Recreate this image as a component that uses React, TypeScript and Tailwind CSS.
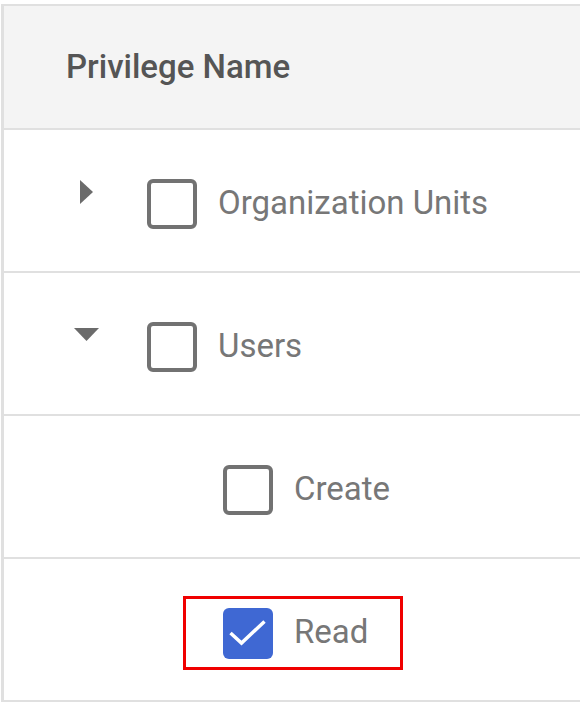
import React from "react";

type Row = {
  label: string;
  level: number;
  caret?: "right" | "down";
  checked?: boolean;
  highlight?: boolean;
};

const rows: Row[] = [
  { label: "Organization Units", level: 0, caret: "right" },
  { label: "Users", level: 0, caret: "down" },
  { label: "Create", level: 1 },
  { label: "Read", level: 1, checked: true, highlight: true },
];

function Caret({ dir }: { dir: "right" | "down" }) {
  return (
    <div className="w-[40px] h-[30px] flex items-center justify-center mb-[25px]">
      {dir === "right" ? (
        <svg width="13" height="24" viewBox="0 0 13 24">
          <path d="M0 0 L13 12 L0 24 Z" fill="#6b6b6b" />
        </svg>
      ) : (
        <svg width="25" height="13" viewBox="0 0 25 13">
          <path d="M0 0 L25 0 L12.5 13 Z" fill="#6b6b6b" />
        </svg>
      )}
    </div>
  );
}

function Checkbox({ checked }: { checked?: boolean }) {
  if (checked) {
    return (
      <div className="w-[50px] h-[51px] rounded-[6px] bg-[#3f68d3] flex items-center justify-center shrink-0">
        <svg width="50" height="51" viewBox="0 0 50 51">
          <path
            d="M7.5 25 L18.5 35 L41.5 13.5"
            fill="none"
            stroke="#ffffff"
            strokeWidth="3.5"
          />
        </svg>
      </div>
    );
  }
  return (
    <div className="w-[50px] h-[50px] rounded-[6px] border-[4px] border-[#727272] bg-white shrink-0" />
  );
}

export default function App() {
  return (
    <div
      className="w-[580px] h-[710px] overflow-hidden bg-white pt-[4px]"
      style={{ fontFamily: "Roboto, 'Liberation Sans', sans-serif" }}
    >
      <div className="ml-[1px] border-t-2 border-l-[3px] border-[#e0e0e0]">
        <div className="h-[124px] bg-[#f4f4f4] border-b-2 border-[#e0e0e0] flex items-center pl-[62px]">
          <span className="text-[33px] font-medium text-[#555555] -mt-[1px]">
            Privilege Name
          </span>
        </div>
        {rows.map((row) => (
          <div
            key={row.label}
            className="h-[143px] border-b-2 border-[#e0e0e0] flex items-center pt-[7px]"
          >
            {row.level === 0 ? (
              <div className="flex items-center pl-[62px]">
                <Caret dir={row.caret!} />
                <div className="ml-[41px]">
                  <Checkbox checked={row.checked} />
                </div>
                <span className="ml-[21px] text-[33px] text-[#777777] -mt-[3px]">
                  {row.label}
                </span>
              </div>
            ) : (
              <div
                className={
                  row.highlight
                    ? "ml-[179px] flex items-center border-[3px] border-[#f00000] h-[74px] pl-[37px] pr-[32px]"
                    : "ml-[219px] flex items-center"
                }
              >
                <Checkbox checked={row.checked} />
                <span className="ml-[21px] text-[33px] text-[#777777] -mt-[3px]">
                  {row.label}
                </span>
              </div>
            )}
          </div>
        ))}
      </div>
    </div>
  );
}
